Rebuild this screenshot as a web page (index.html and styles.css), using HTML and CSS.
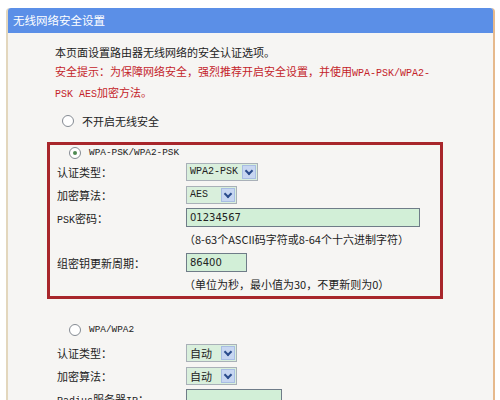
FILE: index.html
```html
<!DOCTYPE html>
<html lang="zh-CN">
<head>
    <meta charset="UTF-8">
    <title>无线网络安全设置</title>
    <link rel="stylesheet" href="styles.css">
</head>
<body>

    <div class="panel">
        <div class="panel-title">无线网络安全设置</div>

        <div class="panel-body">
            <div class="intro">
                <p>本页面设置路由器无线网络的安全认证选项。</p>
                <p class="warn">安全提示：为保障网络安全，强烈推荐开启安全设置，并使用<span class="mono">WPA-PSK/WPA2-</span></p>
                <p class="warn"><span class="mono">PSK AES</span>加密方法。</p>
            </div>

            <div class="radio-row first">
                <span class="radio"></span>
                <span>不开启无线安全</span>
            </div>

            <!-- highlighted section -->
            <div class="mode-box">
                <div class="radio-row">
                    <span class="radio checked"></span>
                    <span class="mono small">WPA-PSK/WPA2-PSK</span>
                </div>
                <div class="form-row">
                    <label>认证类型：</label>
                    <div class="select w-type"><span class="mono">WPA2-PSK</span><i class="arrow"></i></div>
                </div>
                <div class="form-row">
                    <label>加密算法：</label>
                    <div class="select w-small"><span class="mono">AES</span><i class="arrow"></i></div>
                </div>
                <div class="form-row">
                    <label><span class="mono">PSK</span>密码：</label>
                    <div class="input w-psk">01234567</div>
                </div>
                <div class="hint-row">（8-63个ASCII码字符或8-64个十六进制字符）</div>
                <div class="form-row">
                    <label>组密钥更新周期：</label>
                    <div class="input w-period">86400</div>
                </div>
                <div class="hint-row">（单位为秒，最小值为30，不更新则为0）</div>
            </div>

            <div class="mode-plain">
                <div class="radio-row">
                    <span class="radio"></span>
                    <span class="mono small">WPA/WPA2</span>
                </div>
                <div class="form-row">
                    <label>认证类型：</label>
                    <div class="select w-small"><span>自动</span><i class="arrow"></i></div>
                </div>
                <div class="form-row">
                    <label>加密算法：</label>
                    <div class="select w-small"><span>自动</span><i class="arrow"></i></div>
                </div>
                <div class="form-row">
                    <label><span class="mono">Radius</span>服务器<span class="mono">IP</span>：</label>
                    <div class="input w-ip"></div>
                </div>
            </div>
        </div>
    </div>

</body>
</html>
```

FILE: styles.css
```css
body {
    margin: 0;
    background: #ffffff;
    font-family: "Noto Sans CJK SC", "DejaVu Sans", sans-serif;
    font-size: 11px;
    color: #222;
    height: 400px;
    overflow: hidden;
}
p {
    margin: 0;
}
.mono {
    font-family: "Liberation Mono", monospace;
    font-size: 10px;
}
.mono.small {
    font-size: 9.4px;
}

.panel {
    margin: 8px 5px 0 6px;
    border-left: 2px solid #e3d7bd;
    border-right: 2px solid #e6b98c;
    border-radius: 4px 4px 0 0;
    background: #f6f5f3;
    height: 420px;
}
.panel-title {
    height: 25px;
    line-height: 25px;
    padding-left: 5px;
    background: #5b8fe7;
    color: #fff;
    font-size: 11.5px;
    border-radius: 3px 3px 0 0;
}

.panel-body {
    padding-top: 10px;
}
.intro {
    padding-left: 47px;
    line-height: 19px;
}
.warn {
    color: #c4242a;
}

.radio-row {
    display: flex;
    align-items: center;
    height: 15px;
    padding-left: 12px;
    gap: 8px;
}
.radio-row.first {
    margin-top: 9px;
    padding-left: 54px;
}
.radio {
    width: 10px;
    height: 10px;
    border: 1px solid #858b93;
    border-radius: 50%;
    background: #fff;
    position: relative;
}
.radio.checked::after {
    content: "";
    position: absolute;
    left: 3px;
    top: 3px;
    width: 4px;
    height: 4px;
    border-radius: 50%;
    background: #4e8a52;
}

.mode-box {
    margin: 14px 0 0 39px;
    width: 383px;
    border: 3px solid #a8262b;
    padding-left: 7px;
}
.mode-plain {
    margin-top: 23px;
    padding-left: 49px;
}
.mode-plain .radio-row {
    margin-bottom: 4px;
}

.form-row {
    display: flex;
    align-items: center;
    height: 23px;
}
.form-row label {
    width: 129px;
    flex: none;
}
.hint-row {
    height: 22px;
    line-height: 20px;
    padding-left: 127px;
    font-size: 11px;
}

.select {
    display: flex;
    align-items: center;
    justify-content: space-between;
    height: 16px;
    border: 1px solid #a9b0b8;
    background: #d9efdc;
    padding: 0 1px 0 3px;
}
.select .arrow {
    width: 14px;
    height: 14px;
    background: #c7d6f1;
    border: 1px solid #a8bde3;
    box-sizing: border-box;
    position: relative;
}
.select .arrow::after {
    content: "";
    position: absolute;
    left: 3px;
    top: 2px;
    width: 4px;
    height: 4px;
    border-right: 2px solid #2a4c8c;
    border-bottom: 2px solid #2a4c8c;
    transform: rotate(45deg);
}
.w-type {
    width: 66px;
}
.w-small {
    width: 45px;
}

.input {
    height: 17px;
    line-height: 17px;
    border: 1px solid #6f7c88;
    background: #d2efd7;
    padding-left: 3px;
    font-family: "DejaVu Sans", sans-serif;
    font-size: 10px;
}
.w-psk {
    width: 229px;
}
.w-period {
    width: 56px;
}
.w-ip {
    width: 91px;
}
```
